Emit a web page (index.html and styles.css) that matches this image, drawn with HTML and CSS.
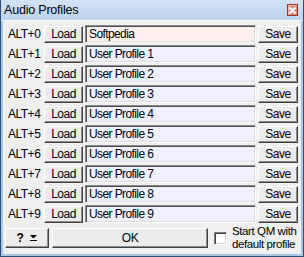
FILE: index.html
```html
<!DOCTYPE html>
<html lang="en">
<head>
    <meta charset="UTF-8">
    <title>Audio Profiles</title>
    <link rel="stylesheet" href="styles.css">
</head>
<body>
    <div class="window">
        <div class="title-bar">
            <span class="title">Audio Profiles</span>
            <button class="close-button">
                <svg width="9" height="9" viewBox="0 0 9 9">
                    <path d="M1.5 1.5 L7.5 7.5 M7.5 1.5 L1.5 7.5" stroke="#fff" stroke-width="2"/>
                </svg>
            </button>
        </div>

        <div class="content">
            <div class="profile-list">
                <div class="profile-row">
                    <span class="hotkey">ALT+0</span>
                    <button class="win-button">Load</button>
                    <input class="profile-name default" value="Softpedia">
                    <button class="win-button">Save</button>
                </div>
                <div class="profile-row">
                    <span class="hotkey">ALT+1</span>
                    <button class="win-button">Load</button>
                    <input class="profile-name" value="User Profile 1">
                    <button class="win-button">Save</button>
                </div>
                <div class="profile-row">
                    <span class="hotkey">ALT+2</span>
                    <button class="win-button">Load</button>
                    <input class="profile-name" value="User Profile 2">
                    <button class="win-button">Save</button>
                </div>
                <div class="profile-row">
                    <span class="hotkey">ALT+3</span>
                    <button class="win-button">Load</button>
                    <input class="profile-name" value="User Profile 3">
                    <button class="win-button">Save</button>
                </div>
                <div class="profile-row">
                    <span class="hotkey">ALT+4</span>
                    <button class="win-button">Load</button>
                    <input class="profile-name" value="User Profile 4">
                    <button class="win-button">Save</button>
                </div>
                <div class="profile-row">
                    <span class="hotkey">ALT+5</span>
                    <button class="win-button">Load</button>
                    <input class="profile-name" value="User Profile 5">
                    <button class="win-button">Save</button>
                </div>
                <div class="profile-row">
                    <span class="hotkey">ALT+6</span>
                    <button class="win-button">Load</button>
                    <input class="profile-name" value="User Profile 6">
                    <button class="win-button">Save</button>
                </div>
                <div class="profile-row">
                    <span class="hotkey">ALT+7</span>
                    <button class="win-button">Load</button>
                    <input class="profile-name" value="User Profile 7">
                    <button class="win-button">Save</button>
                </div>
                <div class="profile-row">
                    <span class="hotkey">ALT+8</span>
                    <button class="win-button">Load</button>
                    <input class="profile-name" value="User Profile 8">
                    <button class="win-button">Save</button>
                </div>
                <div class="profile-row">
                    <span class="hotkey">ALT+9</span>
                    <button class="win-button">Load</button>
                    <input class="profile-name" value="User Profile 9">
                    <button class="win-button">Save</button>
                </div>
            </div>

            <div class="bottom-bar">
                <button class="win-button help-button">
                    <span class="help-mark">?</span>
                    <svg width="7" height="6" viewBox="0 0 7 6">
                        <path d="M0 0 H7 L3.5 3.5 Z" fill="#000"/>
                        <rect x="0" y="5" width="7" height="1" fill="#000"/>
                    </svg>
                </button>
                <button class="win-button ok-button">OK</button>
                <label class="start-option">
                    <span class="checkbox"></span>
                    <span class="start-text">Start QM with<br>default profile</span>
                </label>
            </div>
        </div>
    </div>
</body>
</html>
```

FILE: styles.css
```css
* {
    margin: 0;
    padding: 0;
    box-sizing: border-box;
    font-family: 'Liberation Sans', Arial, sans-serif;
}

body {
    background: #ffffff;
}

.window {
    width: 304px;
    height: 257px;
    border: 1px solid #2f4f78;
    border-top: none;
    box-shadow: inset 2px 0 #a9c4e4, inset -2px 0 #a9c4e4, inset 0 -2px #a9c4e4;
    background: #efefef;
    display: flex;
    flex-direction: column;
}

.title-bar {
    height: 21px;
    background: linear-gradient(#d4e3f4, #bcd2ec);
    border-bottom: 1px solid #fafafa;
    display: flex;
    align-items: center;
    justify-content: space-between;
    padding: 0 5px 1px 3px;
}

.title {
    font-size: 12.5px;
    letter-spacing: -0.2px;
    color: #000;
}

.close-button {
    width: 11px;
    height: 12px;
    background: #d9877c;
    border: 1px solid #8a3a30;
    box-shadow: inset 1px 1px #f0b8b0;
    display: flex;
    align-items: center;
    justify-content: center;
    margin-top: 1px;
}

.content {
    flex: 1;
    padding: 4px 2px 0 2px;
    display: flex;
    flex-direction: column;
}

.profile-list {
    display: flex;
    flex-direction: column;
    gap: 2px;
}

.profile-row {
    display: grid;
    grid-template-columns: 39px 39px 171px 40px;
    column-gap: 2px;
    height: 18px;
    align-items: center;
}

.hotkey {
    font-size: 12px;
    letter-spacing: -0.5px;
    padding-left: 5px;
    color: #000;
}

.win-button {
    height: 18px;
    background: #ececec;
    border: 1px solid;
    border-color: #ffffff #404040 #404040 #ffffff;
    box-shadow: inset -1px -1px #8c8c8c;
    font-size: 12px;
    letter-spacing: -0.5px;
    color: #000;
    display: flex;
    align-items: center;
    justify-content: center;
}

.profile-row .win-button {
    height: 17px;
}

.profile-name {
    height: 18px;
    width: 100%;
    background: #f0f0ff;
    border: 1px solid;
    border-color: #8c8c8c #ffffff #ffffff #8c8c8c;
    box-shadow: inset 1px 1px #505050, inset -1px -1px #dcdcdc;
    font-size: 12px;
    letter-spacing: -0.6px;
    padding: 0 3px;
    color: #000;
    outline: none;
}

.profile-name.default {
    background: #fff0f0;
}

.bottom-bar {
    margin-top: 5px;
    display: flex;
    align-items: center;
    height: 20px;
}

.bottom-bar .win-button {
    height: 20px;
}

.help-button {
    width: 44px;
    margin-left: 2px;
    gap: 7px;
}

.help-mark {
    font-weight: bold;
    font-size: 12px;
}

.ok-button {
    width: 156px;
    margin-left: 3px;
}

.start-option {
    display: flex;
    align-items: center;
    margin-left: 6px;
    gap: 5px;
}

.checkbox {
    width: 13px;
    height: 13px;
    background: #fff;
    border: 1px solid;
    border-color: #808080 #ffffff #ffffff #808080;
    box-shadow: inset 1px 1px #404040, inset -1px -1px #d4d0c8;
}

.start-text {
    font-size: 11.5px;
    letter-spacing: -0.4px;
    line-height: 13px;
    color: #000;
}
```
